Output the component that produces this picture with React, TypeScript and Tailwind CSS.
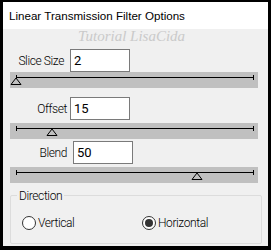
import React from 'react';

const font = { fontFamily: 'Roboto, "Liberation Sans", Arial, sans-serif' };

const Slider: React.FC<{ thumb: number }> = ({ thumb }) => (
  <div className="ml-[7px] h-[16px] w-[248px] bg-[#c0c0c0]">
    <svg width="248" height="16" viewBox="0 0 248 16">
      <line x1="6" y1="5.5" x2="244" y2="5.5" stroke="#000" strokeWidth="1" />
      <line x1="6.5" y1="3" x2="6.5" y2="8" stroke="#000" strokeWidth="1" />
      <line x1="243.5" y1="3" x2="243.5" y2="8" stroke="#000" strokeWidth="1" />
      <polygon
        points={`${thumb},6 ${thumb - 5},12.5 ${thumb + 5},12.5`}
        fill="#c0c0c0"
        stroke="#000"
        strokeWidth="1"
      />
    </svg>
  </div>
);

const Field: React.FC<{ label: string; value: string; labelW: number; inputX: number }> = ({
  label,
  value,
  labelW,
  inputX,
}) => (
  <div className="flex h-[23px] items-center">
    <div className="text-right text-[12px] font-light tracking-[-0.4px] text-black" style={{ width: labelW }}>
      {label}
    </div>
    <div
      className="flex h-[23px] w-[60px] items-center border border-[#7a7a7a] bg-white pl-[3px] text-[13px] text-black"
      style={{ marginLeft: inputX }}
    >
      {value}
    </div>
  </div>
);

const Radio: React.FC<{ checked?: boolean; label: string }> = ({ checked, label }) => (
  <div className="flex items-center gap-[2px] text-[12px] font-light tracking-[-0.4px] text-black">
    <div className="flex h-[14px] w-[14px] items-center justify-center rounded-full border border-[#333] bg-white">
      {checked && <div className="h-[8px] w-[8px] rounded-full bg-[#333]" />}
    </div>
    <span>{label}</span>
  </div>
);

export default function App() {
  return (
    <div className="h-[250px] w-[271px] bg-black pb-[4px] pl-[3px] pr-[3px] pt-[2px]" style={font}>
      <div className="flex h-full flex-col bg-[#f0f0f0]">
        <div
          className="flex h-[27px] shrink-0 items-center bg-white pl-[6px] text-[11.6px] text-[#000]"
          style={{ fontFamily: '"Liberation Sans", Arial, sans-serif' }}
        >
          Linear Transmission Filter Options
        </div>

        {/* watermark */}
        <div className="flex h-[20px] shrink-0 items-start">
          <div
            className="ml-[75px] text-[15px] leading-[15px] italic text-[#cacaca]"
            style={{ fontFamily: '"Liberation Serif", serif' }}
          >
            Tutorial LisaCida
          </div>
        </div>

        <Field label="Slice Size" value="2" labelW={61} inputX={6} />
        <Slider thumb={6} />

        <div className="mt-[9px]">
          <Field label="Offset" value="15" labelW={64} inputX={3} />
        </div>
        <div className="mt-[3px]">
          <Slider thumb={42} />
        </div>

        <div className="mt-[2px]">
          <Field label="Blend" value="50" labelW={64} inputX={6} />
        </div>
        <div className="mt-[3px]">
          <Slider thumb={187} />
        </div>

        <div className="relative ml-[7px] mt-[12px] h-[49px] w-[252px] shrink-0 rounded-[2px] border border-[#dcdcdc]">
          <div className="absolute left-[6px] top-[-9px] bg-[#f0f0f0] px-[2px] text-[12px] font-light tracking-[-0.4px] text-black">
            Direction
          </div>
          <div className="flex h-full items-center pl-[11px] pt-[6px]">
            <div className="w-[120px]">
              <Radio label="Vertical" />
            </div>
            <Radio checked label="Horizontal" />
          </div>
        </div>
      </div>
    </div>
  );
}
